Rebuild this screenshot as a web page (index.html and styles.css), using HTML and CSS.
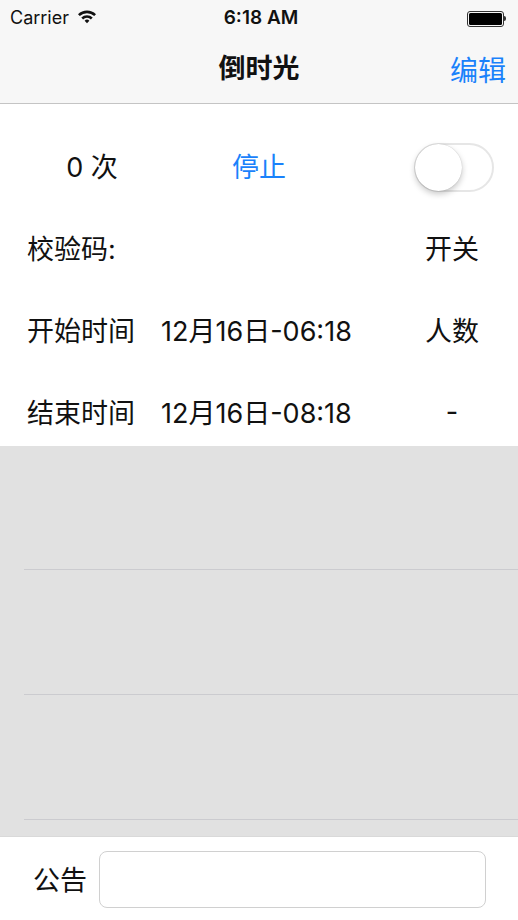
FILE: index.html
```html
<!DOCTYPE html>
<html lang="zh-CN">
<head>
  <meta charset="UTF-8" />
  <meta name="viewport" content="width=device-width, initial-scale=1.0"/>
  <title>倒时光</title>
  <link rel="stylesheet" href="styles.css">
</head>
<body>

  <!-- Barra de status + navegação -->
  <div class="topo">
    <div class="status">
      <div class="status-esq">
        <span>Carrier</span>
        <svg class="wifi" width="20" height="15" viewBox="0 0 20 15">
          <path d="M1 5.2 A13 13 0 0 1 19 5.2 L17.2 7.1 A10.5 10.5 0 0 0 2.8 7.1 Z" fill="#111"/>
          <path d="M4.3 8.5 A8.2 8.2 0 0 1 15.7 8.5 L13.9 10.4 A5.6 5.6 0 0 0 6.1 10.4 Z" fill="#111"/>
          <path d="M7.6 11.8 A3.4 3.4 0 0 1 12.4 11.8 L10 14.3 Z" fill="#111"/>
        </svg>
      </div>
      <div class="hora">6:18 AM</div>
      <div class="status-dir">
        <div class="bateria"><div class="carga"></div></div>
        <div class="bico"></div>
      </div>
    </div>
    <div class="nav">
      <div class="titulo">倒时光</div>
      <div class="editar">编辑</div>
    </div>
  </div>

  <!-- Informações -->
  <div class="info">
    <div class="linha">
      <div class="cel contagem">0 次</div>
      <div class="cel parar">停止</div>
      <div class="cel centro"><div class="chave"><div class="bola"></div></div></div>
    </div>
    <div class="linha">
      <div class="cel">校验码:</div>
      <div class="cel"></div>
      <div class="cel centro">开关</div>
    </div>
    <div class="linha">
      <div class="cel">开始时间</div>
      <div class="cel">12月16日-06:18</div>
      <div class="cel centro">人数</div>
    </div>
    <div class="linha">
      <div class="cel">结束时间</div>
      <div class="cel">12月16日-08:18</div>
      <div class="cel centro">-</div>
    </div>
  </div>

  <!-- Lista vazia -->
  <div class="lista">
    <div class="item"></div>
    <div class="item"></div>
    <div class="item"></div>
  </div>

  <!-- Rodapé -->
  <div class="rodape">
    <span class="rotulo">公告</span>
    <input class="campo" type="text" />
  </div>

</body>
</html>
```

FILE: styles.css
```css
body {
  margin: 0;
  font-family: Inter, "Noto Sans CJK SC", sans-serif;
  color: #111;
  background-color: #fff;
  width: 518px;
  height: 920px;
  overflow: hidden;
}

.topo {
  background-color: #f7f7f7;
  border-bottom: 1px solid #c4c4c4;
}

.status {
  height: 40px;
  box-sizing: border-box;
  padding: 0 12px 5px 10px;
  display: flex;
  align-items: center;
  justify-content: space-between;
  font-size: 18px;
}
.status-esq {
  display: flex;
  align-items: center;
  gap: 8px;
  width: 120px;
}
.wifi {
  margin-top: -3px;
}
.hora {
  font-weight: 600;
  font-size: 19px;
  margin-left: 6px;
}
.status-dir {
  width: 120px;
  display: flex;
  justify-content: flex-end;
  align-items: center;
  padding-top: 2px;
}
.bateria {
  width: 33px;
  height: 12px;
  border: 1.5px solid #333;
  border-radius: 3px;
  padding: 1px;
}
.carga {
  width: 100%;
  height: 100%;
  background-color: #000;
  border-radius: 1.5px;
}
.bico {
  width: 2px;
  height: 5px;
  background-color: #333;
  border-radius: 0 2px 2px 0;
}

.nav {
  height: 63px;
  display: flex;
  align-items: center;
  justify-content: center;
  position: relative;
}
.titulo {
  font-size: 27px;
  font-weight: 700;
  margin-top: -10px;
}
.editar {
  position: absolute;
  right: 12px;
  top: 9px;
  font-size: 28px;
  color: #1a82fb;
}

.info {
  height: 342px;
  padding-top: 20px;
  box-sizing: border-box;
  overflow: hidden;
}
.linha {
  display: grid;
  grid-template-columns: 134px 239px 104px;
  padding-left: 27px;
  height: 82px;
  align-items: center;
  font-size: 27px;
}
.contagem {
  text-align: center;
  padding-right: 4px;
}
.parar {
  padding-left: 71px;
  color: #1a82fb;
}
.centro {
  display: flex;
  justify-content: center;
}

.chave {
  width: 80px;
  height: 49px;
  box-sizing: border-box;
  border: 2px solid #e6e6e6;
  border-radius: 25px;
  background-color: #fff;
  position: relative;
  margin-left: 4px;
  margin-top: 4px;
}
.bola {
  position: absolute;
  left: -1px;
  top: -1px;
  width: 47px;
  height: 47px;
  border-radius: 50%;
  background-color: #fff;
  box-shadow: 0 3px 6px rgba(0, 0, 0, 0.22), 0 0 1px rgba(0, 0, 0, 0.25);
}

.lista {
  background-color: #e1e1e1;
  height: 390px;
  padding-left: 24px;
  box-sizing: border-box;
}
.item {
  height: 125px;
  box-sizing: border-box;
  border-bottom: 1px solid #cbcbcf;
}
.item:first-child {
  height: 124px;
}

.rodape {
  height: 84px;
  box-sizing: border-box;
  border-top: 1px solid #d9d9d9;
  display: flex;
  align-items: center;
  padding: 0 32px 0 33px;
  gap: 12px;
}
.rotulo {
  font-size: 27px;
}
.campo {
  flex: 1;
  height: 57px;
  box-sizing: border-box;
  border: 1px solid #d0d0d0;
  border-radius: 8px;
  outline: none;
  margin-top: 2px;
}
```
